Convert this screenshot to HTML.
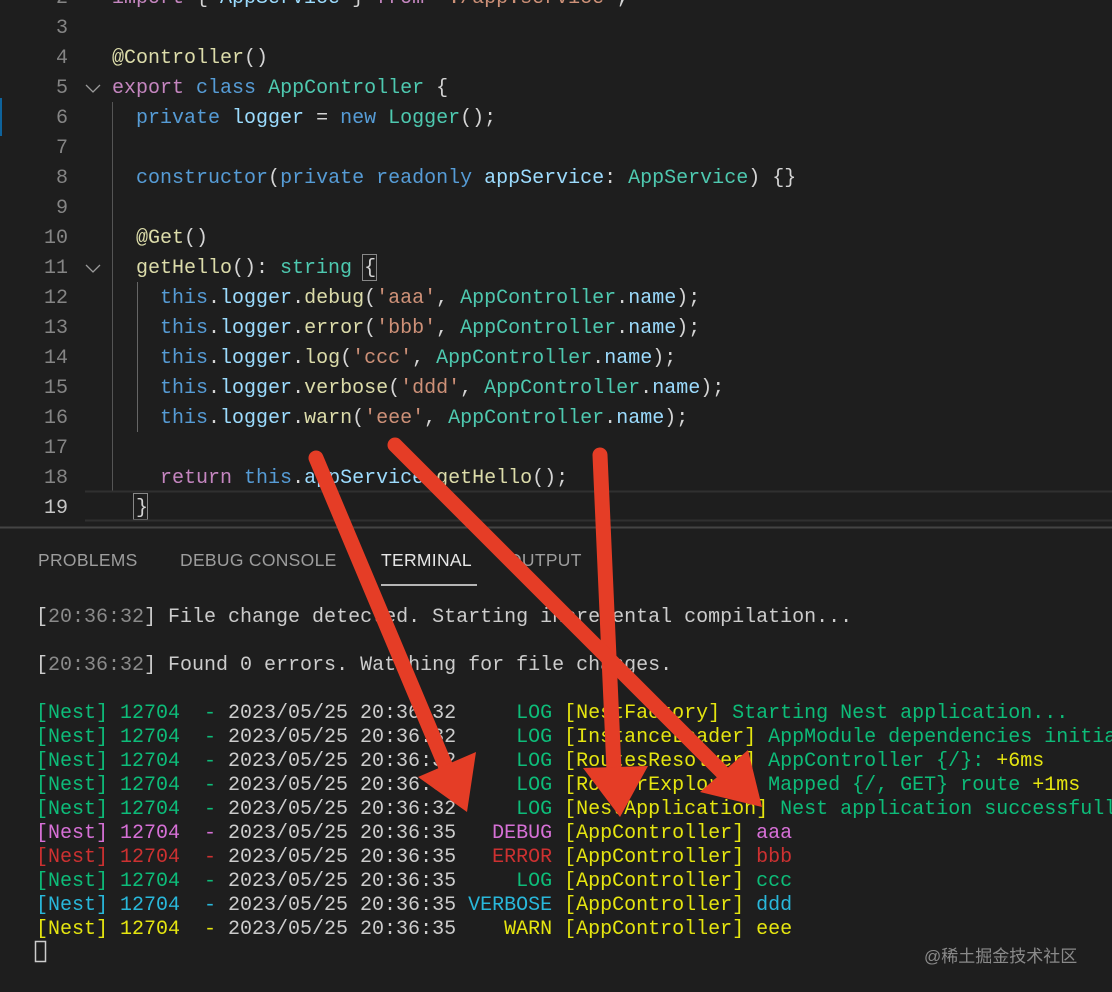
<!DOCTYPE html>
<html><head><meta charset="utf-8"><style>
html,body{margin:0;padding:0;width:1112px;height:992px;overflow:hidden;background:#1e1e1e;}
.mono{font-family:"Liberation Mono",monospace;font-size:20px;}
#code{position:absolute;left:0;top:-16px;width:1112px;}
.ln{position:absolute;left:0;width:68px;text-align:right;color:#858585;}
.cl{position:absolute;left:112px;color:#d4d4d4;white-space:pre;}
.row{position:relative;height:30px;line-height:30px;}
.k{color:#569cd6}.c{color:#4ec9b0}.f{color:#dcdcaa}.v{color:#9cdcfe}.s{color:#ce9178}.p{color:#c586c0}
#term{position:absolute;left:36px;top:606px;width:1076px;overflow:hidden;line-height:24px;color:#cccccc;}
#term div{white-space:pre;height:24px;}
.g{color:#0dbc79}.y{color:#e5e510}.m{color:#d670d6}.r{color:#cd3131}.b{color:#29b8db}.gr{color:#8a8a8a}
.tab{position:absolute;top:550px;font-family:"Liberation Sans",sans-serif;font-size:17.5px;color:#9d9d9d;letter-spacing:.3px}
</style></head><body>
<div style="position:absolute;left:0;top:98px;width:2px;height:38px;background:#0e639c"></div>
<div id="code" class="mono"><div class="row"><span class="ln">2</span><span class="cl"><span class="p">import</span> { <span class="v">AppService</span> } <span class="p">from</span> <span class="s">'./app.service'</span>;</span></div><div class="row"><span class="ln">3</span></div><div class="row"><span class="ln">4</span><span class="cl"><span class="f">@Controller</span>()</span></div><div class="row"><span class="ln">5</span><span class="cl"><span class="p">export</span> <span class="k">class</span> <span class="c">AppController</span> {</span></div><div class="row"><span class="ln">6</span><span class="cl">  <span class="k">private</span> <span class="v">logger</span> = <span class="k">new</span> <span class="c">Logger</span>();</span></div><div class="row"><span class="ln">7</span></div><div class="row"><span class="ln">8</span><span class="cl">  <span class="k">constructor</span>(<span class="k">private</span> <span class="k">readonly</span> <span class="v">appService</span>: <span class="c">AppService</span>) {}</span></div><div class="row"><span class="ln">9</span></div><div class="row"><span class="ln">10</span><span class="cl">  <span class="f">@Get</span>()</span></div><div class="row"><span class="ln">11</span><span class="cl">  <span class="f">getHello</span>(): <span class="c">string</span> {</span></div><div class="row"><span class="ln">12</span><span class="cl">    <span class="k">this</span>.<span class="v">logger</span>.<span class="f">debug</span>(<span class="s">'aaa'</span>, <span class="c">AppController</span>.<span class="v">name</span>);</span></div><div class="row"><span class="ln">13</span><span class="cl">    <span class="k">this</span>.<span class="v">logger</span>.<span class="f">error</span>(<span class="s">'bbb'</span>, <span class="c">AppController</span>.<span class="v">name</span>);</span></div><div class="row"><span class="ln">14</span><span class="cl">    <span class="k">this</span>.<span class="v">logger</span>.<span class="f">log</span>(<span class="s">'ccc'</span>, <span class="c">AppController</span>.<span class="v">name</span>);</span></div><div class="row"><span class="ln">15</span><span class="cl">    <span class="k">this</span>.<span class="v">logger</span>.<span class="f">verbose</span>(<span class="s">'ddd'</span>, <span class="c">AppController</span>.<span class="v">name</span>);</span></div><div class="row"><span class="ln">16</span><span class="cl">    <span class="k">this</span>.<span class="v">logger</span>.<span class="f">warn</span>(<span class="s">'eee'</span>, <span class="c">AppController</span>.<span class="v">name</span>);</span></div><div class="row"><span class="ln">17</span></div><div class="row"><span class="ln">18</span><span class="cl">    <span class="p">return</span> <span class="k">this</span>.<span class="v">appService</span>.<span class="f">getHello</span>();</span></div><div class="row"><span class="ln" style="color:#c6c6c6">19</span><span class="cl">  }</span></div></div>
<svg style="position:absolute;left:0;top:0" width="1112" height="992">
<path d="M86 85l7 7 7-7M86 265l7 7 7-7" stroke="#9a9a9a" stroke-width="1.3" fill="none"/>
<line x1="112.5" y1="102" x2="112.5" y2="492" stroke="#555"/>
<line x1="137.5" y1="282" x2="137.5" y2="432" stroke="#666"/>
<rect x="362.5" y="254.5" width="14" height="26" fill="none" stroke="#888"/>
<rect x="133.5" y="493.5" width="14" height="26" fill="none" stroke="#888"/>
<line x1="85" y1="491.5" x2="1112" y2="491.5" stroke="#303030" stroke-width="2"/>
<line x1="85" y1="520.5" x2="1112" y2="520.5" stroke="#303030" stroke-width="2"/>
<line x1="0" y1="527.5" x2="1112" y2="527.5" stroke="#444" stroke-width="2"/>
<line x1="381" y1="585" x2="477" y2="585" stroke="#e7e7e7" stroke-width="1.5"/>
<rect x="35.5" y="941.5" width="10" height="20" fill="none" stroke="#ccc" stroke-width="1.5"/>
</svg>
<div class="tab" style="left:38px">PROBLEMS</div>
<div class="tab" style="left:180px">DEBUG CONSOLE</div>
<div class="tab" style="left:381px;color:#e7e7e7">TERMINAL</div>
<div class="tab" style="left:508px">OUTPUT</div>
<div id="term" class="mono"><div>[<span class="gr">20:36:32</span>] File change detected. Starting incremental compilation...</div><div> </div><div>[<span class="gr">20:36:32</span>] Found 0 errors. Watching for file changes.</div><div> </div><div><span class="g">[Nest] 12704  - </span>2023/05/25 20:36:32 <span class="g">    LOG</span> <span class="y">[NestFactory]</span> <span class="g">Starting Nest application...</span></div><div><span class="g">[Nest] 12704  - </span>2023/05/25 20:36:32 <span class="g">    LOG</span> <span class="y">[InstanceLoader]</span> <span class="g">AppModule dependencies initialized</span></div><div><span class="g">[Nest] 12704  - </span>2023/05/25 20:36:32 <span class="g">    LOG</span> <span class="y">[RoutesResolver]</span> <span class="g">AppController {/}:</span> <span class="y">+6ms</span></div><div><span class="g">[Nest] 12704  - </span>2023/05/25 20:36:32 <span class="g">    LOG</span> <span class="y">[RouterExplorer]</span> <span class="g">Mapped {/, GET} route</span> <span class="y">+1ms</span></div><div><span class="g">[Nest] 12704  - </span>2023/05/25 20:36:32 <span class="g">    LOG</span> <span class="y">[NestApplication]</span> <span class="g">Nest application successfully started</span></div><div><span class="m">[Nest] 12704  - </span>2023/05/25 20:36:35 <span class="m">  DEBUG</span> <span class="y">[AppController]</span> <span class="m">aaa</span></div><div><span class="r">[Nest] 12704  - </span>2023/05/25 20:36:35 <span class="r">  ERROR</span> <span class="y">[AppController]</span> <span class="r">bbb</span></div><div><span class="g">[Nest] 12704  - </span>2023/05/25 20:36:35 <span class="g">    LOG</span> <span class="y">[AppController]</span> <span class="g">ccc</span></div><div><span class="b">[Nest] 12704  - </span>2023/05/25 20:36:35 <span class="b">VERBOSE</span> <span class="y">[AppController]</span> <span class="b">ddd</span></div><div><span class="y">[Nest] 12704  - </span>2023/05/25 20:36:35 <span class="y">   WARN</span> <span class="y">[AppController]</span> <span class="y">eee</span></div></div>
<div style="position:absolute;left:924px;top:942px;font-family:'Liberation Sans','Noto Sans CJK SC',sans-serif;font-size:17px;color:#8a8a8a">@稀土掘金技术社区</div>
<svg style="position:absolute;left:0;top:0" width="1112" height="992">
<g stroke="#e53d26" stroke-width="15" stroke-linecap="round" fill="none">
<line x1="316" y1="458" x2="448" y2="772"/>
<line x1="600" y1="455" x2="614" y2="770"/>
<line x1="395" y1="445" x2="722" y2="772"/>
</g>
<g fill="#e53d26">
<polygon points="418,777 476,752 467,812"/>
<polygon points="583,768 648,766 620,817"/>
<polygon points="700,792 748,750 762,807"/>
</g>
</svg>
</body></html>
